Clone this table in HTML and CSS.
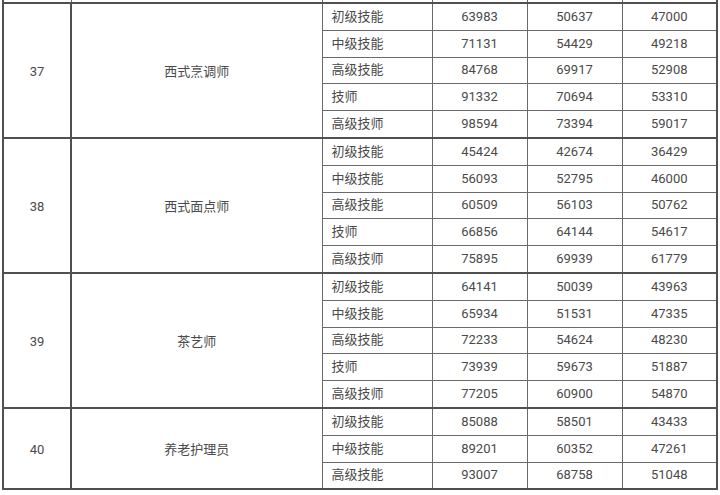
FILE: index.html
```html
<!DOCTYPE html>
<html lang="zh">
<head>
<meta charset="utf-8">
<link rel="stylesheet" href="styles.css">
</head>
<body>
<div class="sheet">
<table class="wage">
<colgroup>
<col class="c-no"><col class="c-job"><col class="c-lv"><col class="c-n"><col class="c-n"><col class="c-n">
</colgroup>
<tbody>
<tr class="stub"><td></td><td></td><td></td><td></td><td></td><td></td></tr>

<tr class="grp"><td rowspan="5" class="no">37</td><td rowspan="5" class="job">西式烹调师</td><td class="lv">初级技能</td><td>63983</td><td>50637</td><td>47000</td></tr>
<tr><td class="lv">中级技能</td><td>71131</td><td>54429</td><td>49218</td></tr>
<tr><td class="lv">高级技能</td><td>84768</td><td>69917</td><td>52908</td></tr>
<tr><td class="lv">技师</td><td>91332</td><td>70694</td><td>53310</td></tr>
<tr><td class="lv">高级技师</td><td>98594</td><td>73394</td><td>59017</td></tr>

<tr class="grp"><td rowspan="5" class="no">38</td><td rowspan="5" class="job">西式面点师</td><td class="lv">初级技能</td><td>45424</td><td>42674</td><td>36429</td></tr>
<tr><td class="lv">中级技能</td><td>56093</td><td>52795</td><td>46000</td></tr>
<tr><td class="lv">高级技能</td><td>60509</td><td>56103</td><td>50762</td></tr>
<tr><td class="lv">技师</td><td>66856</td><td>64144</td><td>54617</td></tr>
<tr><td class="lv">高级技师</td><td>75895</td><td>69939</td><td>61779</td></tr>

<tr class="grp"><td rowspan="5" class="no">39</td><td rowspan="5" class="job">茶艺师</td><td class="lv">初级技能</td><td>64141</td><td>50039</td><td>43963</td></tr>
<tr><td class="lv">中级技能</td><td>65934</td><td>51531</td><td>47335</td></tr>
<tr><td class="lv">高级技能</td><td>72233</td><td>54624</td><td>48230</td></tr>
<tr><td class="lv">技师</td><td>73939</td><td>59673</td><td>51887</td></tr>
<tr><td class="lv">高级技师</td><td>77205</td><td>60900</td><td>54870</td></tr>

<tr class="grp"><td rowspan="3" class="no">40</td><td rowspan="3" class="job">养老护理员</td><td class="lv">初级技能</td><td>85088</td><td>58501</td><td>43433</td></tr>
<tr><td class="lv">中级技能</td><td>89201</td><td>60352</td><td>47261</td></tr>
<tr><td class="lv">高级技能</td><td>93007</td><td>68758</td><td>51048</td></tr>
</tbody>
</table>
</div>
</body>
</html>
```

FILE: styles.css
```css
html, body {
  margin: 0;
  padding: 0;
  background: #ffffff;
}

.sheet {
  padding: 0 0 0 2px;
  width: 716px;
}

.wage {
  width: 716px;
  table-layout: fixed;
  border-collapse: collapse;
  font-family: Roboto, "Noto Sans CJK SC", sans-serif;
  font-size: 13px;
  color: #4a4a4a;
  border: 2px solid #505050;
  border-top: none;
}

.c-no { width: 68px; }
.c-job { width: 251px; }
.c-lv { width: 110px; }
.c-n { width: 95px; }

.wage td {
  height: 25.8px;
  padding: 0;
  border: 1px solid #6a6a6a;
  text-align: center;
  vertical-align: middle;
  line-height: 16px;
}

.wage td.lv {
  text-align: left;
  padding-left: 9px;
}

.wage tr.stub td {
  height: 2px;
  border-top: none;
  border-bottom: 2px solid #505050;
}

.wage tr.grp td {
  border-top: 2px solid #505050;
}

.wage td.no,
.wage td.job {
  padding-top: 3px;
  border-bottom: 2px solid #505050;
}

.wage td.no {
  border-right: 2px solid #505050;
}
```
